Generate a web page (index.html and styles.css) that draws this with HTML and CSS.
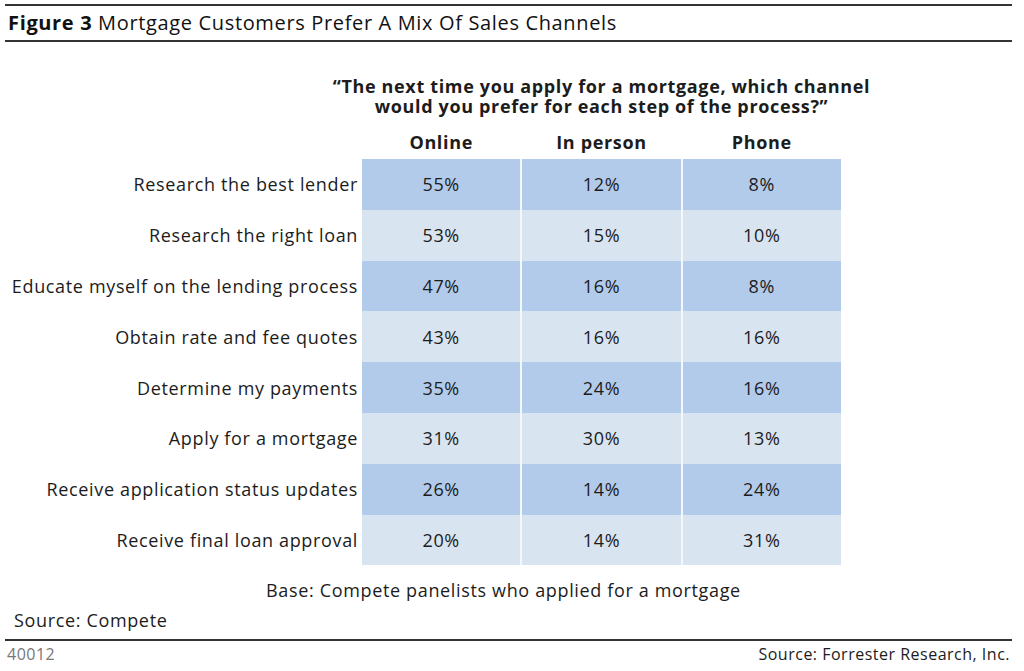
FILE: index.html
```html
<!DOCTYPE html>
<html>
<head>
<meta charset="utf-8">
<link rel="stylesheet" href="styles.css">
</head>
<body>
<div class="page">
  <div class="title"><b>Figure 3</b> Mortgage Customers Prefer A Mix Of Sales Channels</div>
  <div class="chart">
    <div class="labels">
      <div class="lab">Research the best lender</div>
      <div class="lab">Research the right loan</div>
      <div class="lab">Educate myself on the lending process</div>
      <div class="lab">Obtain rate and fee quotes</div>
      <div class="lab">Determine my payments</div>
      <div class="lab">Apply for a mortgage</div>
      <div class="lab">Receive application status updates</div>
      <div class="lab">Receive final loan approval</div>
    </div>
    <div class="right">
      <div class="question">
        <div>“The next time you apply for a mortgage, which channel</div>
        <div>would you prefer for each step of the process?”</div>
      </div>
      <div class="heads"><div>Online</div><div>In person</div><div>Phone</div></div>
      <div class="grid">
        <div class="c d">55%</div><div class="c d">12%</div><div class="c d">8%</div>
        <div class="c l">53%</div><div class="c l">15%</div><div class="c l">10%</div>
        <div class="c d">47%</div><div class="c d">16%</div><div class="c d">8%</div>
        <div class="c l">43%</div><div class="c l">16%</div><div class="c l">16%</div>
        <div class="c d">35%</div><div class="c d">24%</div><div class="c d">16%</div>
        <div class="c l">31%</div><div class="c l">30%</div><div class="c l">13%</div>
        <div class="c d">26%</div><div class="c d">14%</div><div class="c d">24%</div>
        <div class="c l">20%</div><div class="c l">14%</div><div class="c l">31%</div>
      </div>
    </div>
  </div>
  <div class="base">Base: Compete panelists who applied for a mortgage</div>
  <div class="source">Source: Compete</div>
  <div class="footer"><span class="num">40012</span><span>Source: Forrester Research, Inc.</span></div>
</div>
</body>
</html>
```
FILE: styles.css
```css
html, body { margin: 0; padding: 0; background: #fff; }
body { font-family: "Open Sans", "Liberation Sans", sans-serif; color: #1c1c1c; letter-spacing: 0.65px; }
.page { width: 1024px; height: 671px; padding-top: 4px; box-sizing: border-box; }
.title {
  margin: 0 12px 0 5px;
  border-top: 2px solid #333;
  border-bottom: 2px solid #333;
  height: 34px;
  line-height: 34px;
  padding-left: 3px;
  font-size: 20px;
  color: #111;
}
.title b { font-weight: 700; }
.chart { display: flex; margin-top: 34px; }
.labels {
  width: 357px;
  padding-top: 83px;
  display: grid;
  grid-auto-rows: 50.8px;
  align-items: center;
  text-align: right;
  font-size: 18px;
  white-space: nowrap;
}
.lab { margin-right: -1px; }
.right { width: 479px; margin-left: 5px; }
.question {
  display: flex;
  flex-direction: column;
  align-items: center;
  font-weight: 700;
  font-size: 18px;
  line-height: 20px;
  white-space: nowrap;
}
.heads {
  display: grid;
  grid-template-columns: 1fr 1fr 1fr;
  column-gap: 2px;
  margin-top: 16px;
  height: 27px;
  line-height: 20px;
  font-weight: 700;
  font-size: 18px;
  text-align: center;
}
.grid {
  display: grid;
  grid-template-columns: 1fr 1fr 1fr;
  grid-auto-rows: 50.8px;
  column-gap: 2px;
  background: #f4f7fb;
}
.c { display: flex; align-items: center; justify-content: center; font-size: 18px; }
.d { background: #b3cbea; }
.l { background: #d9e4f1; }
.base { width: 1007px; text-align: center; font-size: 18px; margin-top: 14px; line-height: 22px; }
.source { padding-left: 14px; font-size: 18px; margin-top: 8px; line-height: 22px; }
.footer {
  margin: 8px 12px 0 5px;
  border-top: 2px solid #333;
  display: flex;
  justify-content: space-between;
  font-size: 16px;
  letter-spacing: 0.5px;
  line-height: 26px;
  padding: 0 2px;
}
.num { color: #777; }
```
